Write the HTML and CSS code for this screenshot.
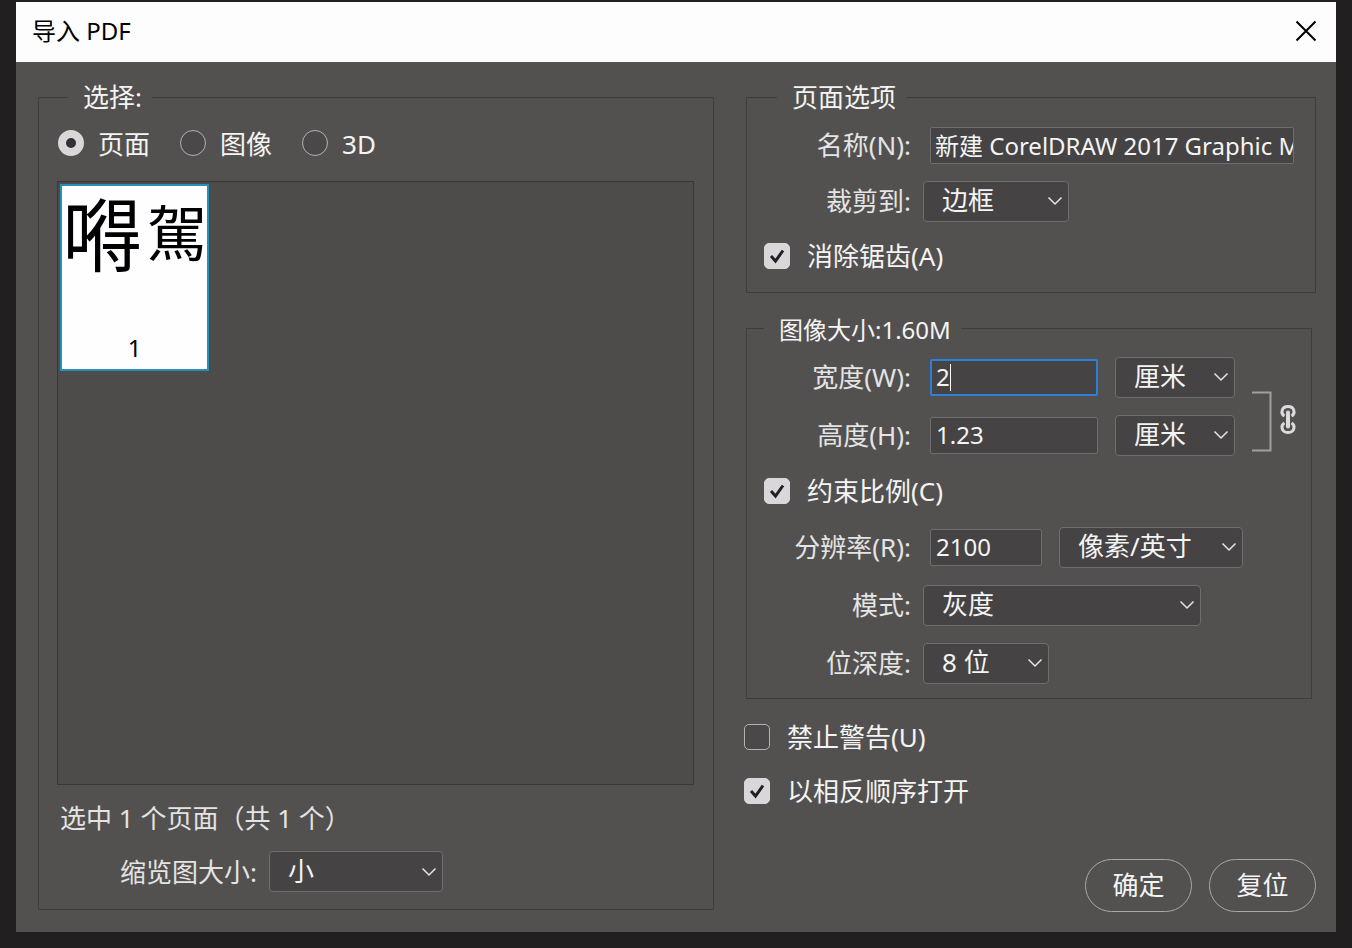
FILE: index.html
```
<!DOCTYPE html>
<html lang="zh-CN">
<head>
    <meta charset="UTF-8">
    <meta name="viewport" content="width=device-width, initial-scale=1.0">
    <title>导入 PDF</title>
    <link rel="stylesheet" href="styles.css">
</head>
<body>
    <div class="dialog">
        <header class="titlebar">
            <h1>导入 PDF</h1>
            <button type="button" class="close" aria-label="关闭">
                <svg width="22" height="22" viewBox="0 0 22 22"><path d="M1.5 1.5 L20.5 20.5 M20.5 1.5 L1.5 20.5" stroke="#000" stroke-width="2" fill="none"/></svg>
            </button>
        </header>

        <form class="content">
            <fieldset class="group select-group">
                <legend>选择:</legend>
                <div class="radios">
                    <label><input type="radio" name="kind" checked>页面</label>
                    <label><input type="radio" name="kind">图像</label>
                    <label><input type="radio" name="kind">3D</label>
                </div>
                <div class="pages">
                    <div class="thumb">
                        <div class="drawing"><span>嘚</span><span class="narrow">駕</span></div>
                        <div class="number">1</div>
                    </div>
                </div>
                <p class="status">选中 1 个页面（共 1 个）</p>
                <div class="thumb-size">
                    <label for="thumbSize">缩览图大小:</label>
                    <select id="thumbSize">
                        <option>小</option>
                    </select>
                </div>
            </fieldset>

            <div class="options">
                <fieldset class="group page-group">
                    <legend>页面选项</legend>
                    <div class="row">
                        <label for="name">名称(N):</label>
                        <input type="text" id="name" class="name" value="新建 CorelDRAW 2017 Graphic M">
                    </div>
                    <div class="row">
                        <label for="crop">裁剪到:</label>
                        <select id="crop" class="w-crop">
                            <option>边框</option>
                        </select>
                    </div>
                    <label class="check"><input type="checkbox" checked>消除锯齿(A)</label>
                </fieldset>

                <fieldset class="group size-group">
                    <legend>图像大小:1.60M</legend>
                    <div class="size">
                        <div>
                            <div class="row">
                                <label for="width">宽度(W):</label>
                                <div class="field">
                                    <input type="text" id="width" class="w-size active" value="2">
                                    <span class="caret"></span>
                                </div>
                                <select class="unit" aria-label="宽度单位">
                                    <option>厘米</option>
                                </select>
                            </div>
                            <div class="row">
                                <label for="height">高度(H):</label>
                                <input type="text" id="height" class="w-size" value="1.23">
                                <select class="unit" aria-label="高度单位">
                                    <option>厘米</option>
                                </select>
                            </div>
                        </div>
                        <svg class="chain" width="46" height="62" viewBox="0 0 46 62" fill="none">
                            <path d="M0 1.5 H18.5 V59.5 H0" stroke="#a09f9e" stroke-width="2"/>
                            <path d="M32.5 25 C28.5 23 29 15.500 36 15.500 C43 15.500 43.500 23 39.500 25 M32.500 32 C28.500 34 29 41.500 36 41.500 C43 41.500 43.500 34 39.500 32" stroke="#dcdbdb" stroke-width="3"/>
                            <path d="M36 21.500 V35.500" stroke="#dcdbdb" stroke-width="4" stroke-linecap="round"/>
                        </svg>
                    </div>
                    <label class="check"><input type="checkbox" checked>约束比例(C)</label>
                    <div class="row">
                        <label for="resolution">分辨率(R):</label>
                        <input type="text" id="resolution" class="w-res" value="2100">
                        <select class="unit w-resunit" aria-label="分辨率单位">
                            <option>像素/英寸</option>
                        </select>
                    </div>
                    <div class="row">
                        <label for="mode">模式:</label>
                        <select id="mode" class="w-mode">
                            <option>灰度</option>
                        </select>
                    </div>
                    <div class="row">
                        <label for="depth">位深度:</label>
                        <select id="depth" class="w-depth">
                            <option>8 位</option>
                        </select>
                    </div>
                </fieldset>

                <div class="extra">
                    <label class="check"><input type="checkbox">禁止警告(U)</label>
                    <label class="check"><input type="checkbox" checked>以相反顺序打开</label>
                </div>

                <div class="buttons">
                    <button type="submit">确定</button>
                    <button type="reset">复位</button>
                </div>
            </div>
        </form>
    </div>
</body>
</html>
```
FILE: styles.css
```
* {
    box-sizing: border-box;
}

body {
    margin: 0;
    padding: 2px 16px 16px;
    min-height: 100vh;
    display: flex;
    background-color: #211f1f;
    font-family: "Noto Sans", "Noto Sans CJK SC", sans-serif;
    font-size: 26px;
    line-height: 34px;
    color: #f4f4f4;
}

button, input, select {
    font-family: inherit;
    font-size: inherit;
    color: inherit;
    margin: 0;
}

.dialog {
    flex: 1;
    display: flex;
    flex-direction: column;
    background-color: #535150;
}

/* title bar */
.titlebar {
    display: flex;
    align-items: center;
    justify-content: space-between;
    height: 60px;
    padding: 0 19px 3px 16px;
    background-color: #fefdfe;
    color: #000;
}

.titlebar h1 {
    margin: 0;
    font-size: 24px;
    font-weight: 400;
}

.close {
    display: flex;
    padding: 0;
    border: none;
    background: none;
}

.content {
    flex: 1;
    display: grid;
    grid-template-columns: 676fr 570fr;
    gap: 32px;
    padding: 18px 20px 20px 22px;
}

.group {
    min-width: 0;
    margin: 0;
    border: 1px solid #3f3d3c;
}

legend {
    padding: 0 10px 0 15px;
}

/* left side */
.select-group {
    display: flex;
    flex-direction: column;
    margin-bottom: 2px;
    padding: 10px 19px 17px 18px;
}

.select-group legend {
    margin-left: 11px;
}

.radios {
    display: flex;
    gap: 30px;
    height: 57px;
    padding: 3px 1px 0;
}

.radios label {
    display: flex;
    gap: 14px;
    height: 34px;
}

input[type="radio"] {
    appearance: none;
    width: 26px;
    height: 26px;
    margin-top: 3px;
    border: 1px solid #b4b3b3;
    border-radius: 50%;
    background-color: #4a4848;
}

input[type="radio"]:checked {
    border: 8px solid #d9d7d9;
    background-color: #333132;
}

.pages {
    flex: 1;
    padding: 2px;
    border: 1px solid #393736;
    background-color: #4e4c4b;
}

.thumb {
    display: flex;
    flex-direction: column;
    justify-content: space-between;
    width: 149px;
    height: 187px;
    padding-bottom: 4px;
    border: 2px solid #2590bb;
    background-color: #fefdff;
    color: #000;
}

.drawing {
    display: flex;
    justify-content: space-between;
    align-items: center;
    height: 88px;
    font-family: "Noto Sans CJK TC", sans-serif;
    font-size: 80px;
}

.drawing .narrow {
    font-size: 60px;
}

.number {
    text-align: center;
    font-size: 24px;
}

.status {
    margin: 16px 0;
    padding-left: 3px;
    color: #e4e4e4;
}

.thumb-size {
    display: flex;
    align-items: center;
    gap: 12px;
    padding-left: 63px;
}

.thumb-size select {
    width: 174px;
}

.thumb-size label,
.row label {
    color: #e4e4e4;
}

/* fields */
select {
    appearance: none;
    height: 41px;
    padding: 0 28px 2px 18px;
    border: 1px solid #6f6e6c;
    border-radius: 4px;
    background: #454343 url("data:image/svg+xml,%3Csvg xmlns='http://www.w3.org/2000/svg' width='16' height='10'%3E%3Cpath d='M1.500 1.500 L8 8 L14.500 1.500' fill='none' stroke='%23e6e6e6' stroke-width='1.500'/%3E%3C/svg%3E") no-repeat right 5px center;
}

input[type="text"] {
    height: 37px;
    margin-left: 7px;
    padding: 0 5px 2px;
    border: 1px solid #6f6e6c;
    border-radius: 2px;
    background-color: #454343;
    font-size: 24px;
}

input[type="text"].name {
    flex: 1;
    min-width: 0;
    padding: 0 0 2px 4px;
}

input[type="text"].active {
    border: 2px solid #2e80d4;
    padding: 0 4px 2px;
    outline: none;
}

.field {
    position: relative;
    display: flex;
}

.caret {
    position: absolute;
    left: 27px;
    top: 5px;
    width: 1px;
    height: 27px;
    background-color: #fff;
}

input[type="checkbox"] {
    appearance: none;
    flex: none;
    width: 26px;
    height: 26px;
    border: 1px solid #b4b3b3;
    border-radius: 5px;
    background-color: #4a4848;
}

input[type="checkbox"]:checked {
    border-color: #d9d7d9;
    background: #d9d7d9 url("data:image/svg+xml,%3Csvg xmlns='http://www.w3.org/2000/svg' width='16' height='16'%3E%3Cpath d='M2 8 L6.500 13 L14 2.500' fill='none' stroke='%23222122' stroke-width='3'/%3E%3C/svg%3E") no-repeat center;
}

.row {
    display: flex;
    align-items: center;
    height: 58px;
}

.row label {
    width: 164px;
    margin-right: 12px;
    text-align: right;
}

.check {
    display: flex;
    align-items: center;
    gap: 17px;
    height: 54px;
    padding-left: 17px;
}

/* right side */
.options {
    display: flex;
    flex-direction: column;
    min-width: 0;
}

.page-group {
    padding: 3px 21px 9px 0;
}

.page-group legend {
    margin-left: 30px;
}

.page-group .row {
    height: 56px;
}

.size-group {
    margin: 18px 4px 0 0;
    padding: 3px 0 6px;
}

.size-group legend {
    margin-left: 17px;
    padding-top: 4px;
    font-size: 24px;
    line-height: 30px;
}

.size {
    display: flex;
    align-items: flex-end;
}

.chain {
    margin: 0 0 11px 17px;
}

.unit {
    width: 120px;
    margin-left: 17px;
}

.w-crop {
    width: 146px;
}

.w-size {
    width: 168px;
}

.w-res {
    width: 112px;
}

.w-resunit {
    width: 184px;
}

.w-mode {
    width: 278px;
}

.w-depth {
    width: 126px;
}

.extra {
    margin: 11px 0 0 -2px;
}

.extra .check {
    padding-left: 0;
}

.buttons {
    display: flex;
    justify-content: flex-end;
    gap: 17px;
    margin-top: auto;
}

.buttons button {
    width: 107px;
    height: 53px;
    padding: 0 0 4px;
    border: 1px solid #a9a8a7;
    border-radius: 27px;
    background: none;
}
```
